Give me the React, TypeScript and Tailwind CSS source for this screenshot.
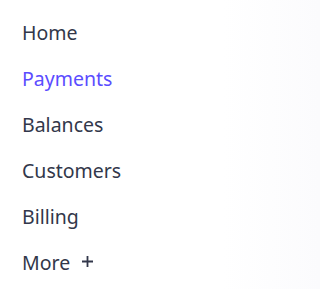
import React from 'react';

const items = ['Home', 'Payments', 'Balances', 'Customers', 'Billing'];

const App: React.FC = () => (
  <div className="w-full min-h-[289px] bg-gradient-to-r from-white from-70% to-[#fbfbfd] font-['Noto_Sans',sans-serif]">
    <nav className="flex flex-col pt-[10px] pl-[22px]">
      {items.map((label) => (
        <a
          key={label}
          href="#"
          className={`h-[46px] flex items-center text-[19.5px] font-[450] ${
            label === 'Payments' ? 'text-[#5b4cff]' : 'text-[#32374a]'
          }`}
        >
          {label}
        </a>
      ))}
      <a href="#" className="h-[46px] flex items-center gap-[12px] text-[19.5px] font-[450] text-[#32374a]">
        More
        <svg width="11" height="11" viewBox="0 0 11 11" className="mb-[3px]">
          <path d="M5.5 0v11M0 5.5h11" stroke="currentColor" strokeWidth="1.8" />
        </svg>
      </a>
    </nav>
  </div>
);

export default App;
